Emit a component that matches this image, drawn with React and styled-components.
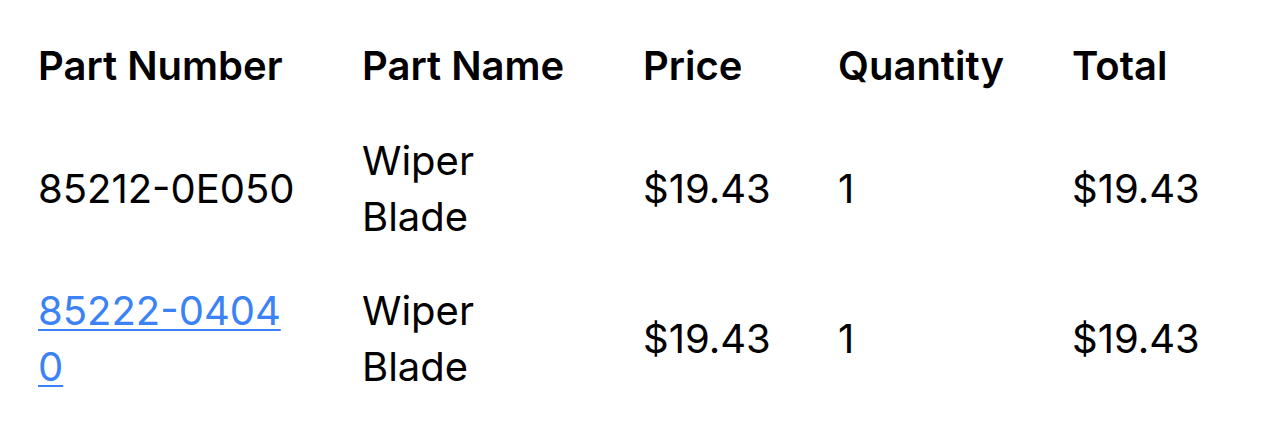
import React from "react";
import styled, { createGlobalStyle } from "styled-components";

const GlobalStyle = createGlobalStyle`
  body {
    margin: 0;
    background: #ffffff;
    font-family: Inter, "Noto Sans", "Liberation Sans", sans-serif;
    color: #000000;
  }
`;

const parts = [
  { number: "85212-0E050", name: "Wiper Blade", price: 19.43, qty: 1, link: false },
  { number: "85222-04040", name: "Wiper Blade", price: 19.43, qty: 1, link: true },
];

const money = (n) => `$${n.toFixed(2)}`;

function App() {
  return (
    <>
      <GlobalStyle />
      <Table>
        <colgroup>
          <Col width={324} />
          <Col width={281} />
          <Col width={195} />
          <Col width={234} />
          <col />
        </colgroup>
        <thead>
          <tr>
            <Th>Part Number</Th>
            <Th>Part Name</Th>
            <Th>Price</Th>
            <Th>Quantity</Th>
            <Th>Total</Th>
          </tr>
        </thead>
        <tbody>
          {parts.map((p) => (
            <tr key={p.number}>
              <NumberCell>
                {p.link ? <PartLink href="#">{p.number}</PartLink> : p.number}
              </NumberCell>
              <Td>{p.name}</Td>
              <Td>{money(p.price)}</Td>
              <Td>{p.qty}</Td>
              <Td>{money(p.price * p.qty)}</Td>
            </tr>
          ))}
        </tbody>
      </Table>
    </>
  );
}

export default App;

const Table = styled.table`
  margin: 18px 38px 0;
  width: calc(100% - 76px);
  border-collapse: collapse;
  table-layout: fixed;
  font-size: 40px;
  line-height: 56px;
`;

const Col = styled.col`
  width: ${(p) => p.width}px;
`;

const Th = styled.th`
  text-align: left;
  font-weight: 600;
  padding: 20px 64px 20px 0;
  white-space: nowrap;
`;

const Td = styled.td`
  font-weight: 400;
  padding: 19px 64px 19px 0;
  vertical-align: middle;
`;

const NumberCell = styled(Td)`
  word-break: break-all;
`;

const PartLink = styled.a`
  color: #3b82f6;
  text-decoration: underline;
  text-decoration-thickness: 2px;
  text-underline-offset: 4px;
`;
